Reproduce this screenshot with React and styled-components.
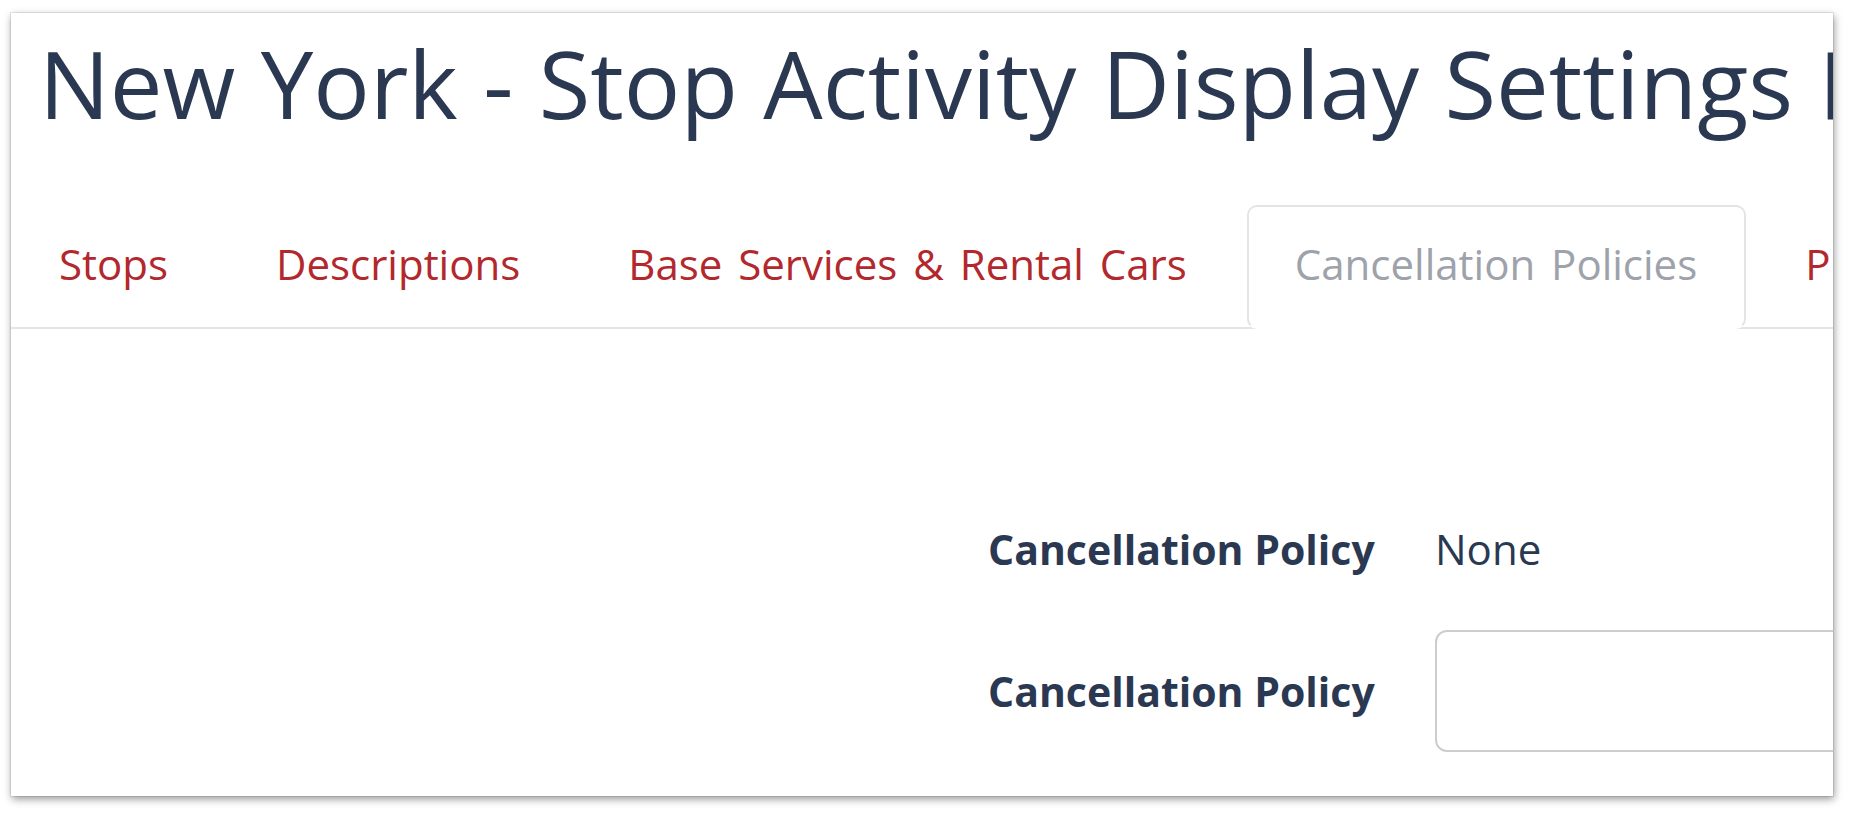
import React from "react";
import styled, { createGlobalStyle } from "styled-components";

const GlobalStyle = createGlobalStyle`
  html, body {
    margin: 0;
    padding: 0;
    background: #ffffff;
  }
  body {
    font-family: "Open Sans", "Noto Sans", sans-serif;
  }
  * { box-sizing: border-box; }
`;

const Page = styled.div`
  width: 1852px;
  height: 816px;
  padding: 13px 0 0 11px;
  background: #ffffff;
  overflow: hidden;
`;

const Panel = styled.div`
  width: 1822px;
  height: 783px;
  background: #ffffff;
  overflow: hidden;
  box-shadow: 0 0 0 1px rgba(0, 0, 0, 0.08), 1px 3px 8px rgba(0, 0, 0, 0.42);
`;

const Title = styled.h1`
  margin: 0;
  padding: 14px 0 0 28px;
  font-family: "Open Sans", "Noto Sans", sans-serif;
  font-weight: 400;
  font-size: 94px;
  line-height: 1.2;
  word-spacing: 1px;
  color: #2a3951;
  white-space: nowrap;
`;

const TabList = styled.nav`
  display: flex;
  margin-top: 65px;
  border-bottom: 2px solid #e4e4e4;
  white-space: nowrap;
`;

const Tab = styled.a`
  flex: none;
  display: block;
  margin: 0 11px -2px 0;
  padding: 28px 47px 34px 46px;
  border: 2px solid ${(p) => (p.$active ? "#e4e4e4" : "transparent")};
  border-bottom-color: ${(p) => (p.$active ? "#ffffff" : "transparent")};
  border-radius: 10px;
  background: ${(p) => (p.$active ? "#ffffff" : "transparent")};
  font-size: 42px;
  line-height: 58px;
  word-spacing: 5px;
  font-weight: 400;
  color: ${(p) => (p.$active ? "#9da2ab" : "#b3282d")};
  text-decoration: none;
  cursor: pointer;
`;

const Form = styled.div`
  display: flex;
  flex-direction: column;
  gap: 52px;
  padding: 191px 0 0 977px;
`;

const Row = styled.div`
  display: grid;
  grid-template-columns: 447px 700px;
  align-items: center;
  min-height: 58px;
`;

const Label = styled.label`
  font-size: 41px;
  line-height: 58px;
  font-weight: 700;
  color: #2a3951;
  white-space: nowrap;
`;

const Value = styled.span`
  font-size: 42px;
  line-height: 58px;
  font-weight: 400;
  color: #2a3951;
`;

const Input = styled.input`
  display: block;
  width: 700px;
  height: 122px;
  padding: 0 24px;
  border: 2px solid #cdcdcd;
  border-radius: 12px;
  background: #ffffff;
  font-family: "Open Sans", "Noto Sans", sans-serif;
  font-size: 42px;
  color: #2a3951;
  outline: none;
`;

const tabs = [
  "Stops",
  "Descriptions",
  "Base Services & Rental Cars",
  "Cancellation Policies",
  "Pricing",
];

export default function App() {
  return (
    <>
      <GlobalStyle />
      <Page>
        <Panel>
          <Title>New York - Stop Activity Display Settings Page</Title>
          <TabList>
            {tabs.map((t) => (
              <Tab key={t} $active={t === "Cancellation Policies"}>
                {t}
              </Tab>
            ))}
          </TabList>
          <Form>
            <Row>
              <Label>Cancellation Policy</Label>
              <Value>None</Value>
            </Row>
            <Row>
              <Label htmlFor="cp">Cancellation Policy</Label>
              <Input id="cp" type="text" />
            </Row>
          </Form>
        </Panel>
      </Page>
    </>
  );
}
